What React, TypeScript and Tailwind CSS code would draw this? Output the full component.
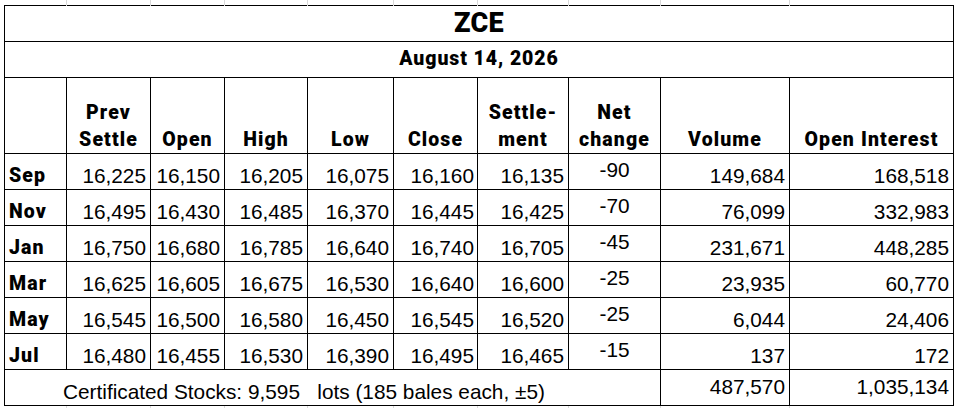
import React from 'react';

const heavy = "font-['Roboto','Liberation_Sans',sans-serif] font-black";
const plain = "font-['Liberation_Sans','Arial',sans-serif]";

const colWidths = [62, 84, 74, 83, 86, 84, 91, 92, 129, 164];

const rows = [
  { m: 'Sep', v: ['16,225', '16,150', '16,205', '16,075', '16,160', '16,135'], net: '-90', vol: '149,684', oi: '168,518' },
  { m: 'Nov', v: ['16,495', '16,430', '16,485', '16,370', '16,445', '16,425'], net: '-70', vol: '76,099', oi: '332,983' },
  { m: 'Jan', v: ['16,750', '16,680', '16,785', '16,640', '16,740', '16,705'], net: '-45', vol: '231,671', oi: '448,285' },
  { m: 'Mar', v: ['16,625', '16,605', '16,675', '16,530', '16,640', '16,600'], net: '-25', vol: '23,935', oi: '60,770' },
  { m: 'May', v: ['16,545', '16,500', '16,580', '16,450', '16,545', '16,520'], net: '-25', vol: '6,044', oi: '24,406' },
  { m: 'Jul', v: ['16,480', '16,455', '16,530', '16,390', '16,495', '16,465'], net: '-15', vol: '137', oi: '172' },
];

const cell = 'border border-black p-0';
const num = `${cell} ${plain} text-[20.8px] leading-[24px] text-right align-bottom pr-[4px] pb-[1px]`;
const head = `${cell} ${heavy} text-[19.5px] leading-[27px] tracking-[1.1px] text-center align-bottom pb-0`;

// faint spreadsheet gridlines above and below the table
function GridStrip({ h }: { h: string }) {
  return (
    <tr className={h}>
      {colWidths.map((_, i) => (
        <td
          key={i}
          className={`p-0 ${i < colWidths.length - 1 ? 'border-r border-[#d9d9d9]' : ''}`}
        />
      ))}
    </tr>
  );
}

export default function App() {
  return (
    <div className="w-[956px] h-[408px] bg-white overflow-hidden text-black">
      <table className="ml-[4px] w-[949px] table-fixed border-collapse">
        <colgroup>
          {colWidths.map((w, i) => (
            <col key={i} style={{ width: w }} />
          ))}
        </colgroup>
        <tbody>
          <GridStrip h="h-[5px]" />

          <tr className="h-[36px]">
            <td colSpan={10} className={`${cell} ${heavy} text-[27px] leading-[30px] tracking-[0.3px] text-center align-middle`}>
              ZCE
            </td>
          </tr>

          <tr className="h-[36px]">
            <td colSpan={10} className={`${cell} ${heavy} text-[19.5px] leading-[22px] tracking-[0.9px] text-center align-middle`}>
              August 14, 2026
            </td>
          </tr>

          <tr className="h-[76px]">
            <td className={head}></td>
            <td className={head}>Prev<br />Settle</td>
            <td className={head}>Open</td>
            <td className={head}>High</td>
            <td className={head}>Low</td>
            <td className={head}>Close</td>
            <td className={head}>Settle-<br />ment</td>
            <td className={head}>Net<br />change</td>
            <td className={head}>Volume</td>
            <td className={head}>Open Interest</td>
          </tr>

          {rows.map((r) => (
            <tr key={r.m} className="h-[36px]">
              <td className={`${cell} ${heavy} text-[19.5px] leading-[24px] tracking-[1.1px] text-left align-bottom pl-[4px] pb-[1px]`}>{r.m}</td>
              {r.v.map((x, i) => (
                <td key={i} className={i === 4 ? num.replace('pr-[4px]', 'pr-[3px]') : num}>
                  {x}
                </td>
              ))}
              <td className={`${cell} ${plain} text-[20.8px] leading-[24px] text-center align-middle pb-[3px]`}>{r.net}</td>
              <td className={num}>{r.vol}</td>
              <td className={num}>{r.oi}</td>
            </tr>
          ))}

          <tr className="h-[36px]">
            <td colSpan={8} className={`${cell} ${plain} text-[20.8px] leading-[24px] text-left align-bottom pl-[58px] pb-[1px] whitespace-pre`}>
              {'Certificated Stocks: 9,595   lots (185 bales each, ±5)'}
            </td>
            <td className={`${cell} ${plain} text-[20.8px] leading-[24px] text-right align-middle pr-[4px]`}>487,570</td>
            <td className={`${cell} ${plain} text-[20.8px] leading-[24px] text-right align-middle pr-[4px]`}>1,035,134</td>
          </tr>

          <GridStrip h="h-[3px]" />
        </tbody>
      </table>
    </div>
  );
}
